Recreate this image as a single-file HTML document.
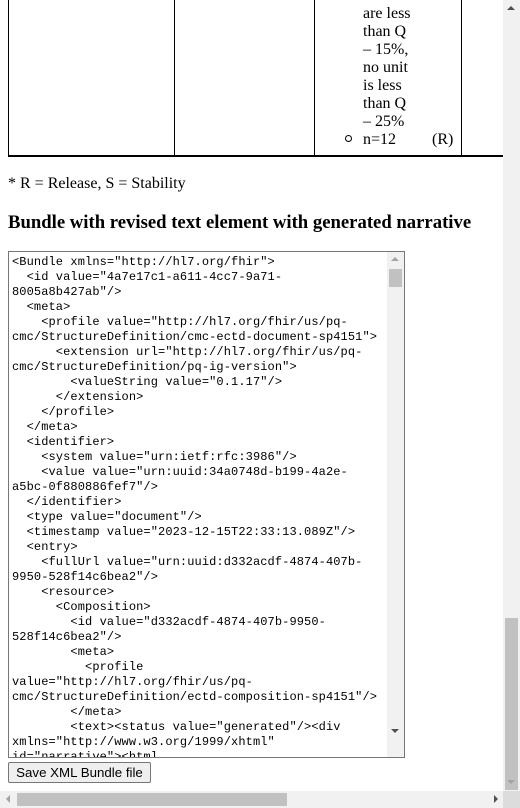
<!DOCTYPE html>
<html><head><style>
body{margin:0;width:520px;height:808px;overflow:hidden;background:#fff;font-family:"Liberation Serif",serif;font-size:16px;color:#000;position:relative}
.a{position:absolute}
.v{position:absolute;top:0;width:1px;height:156px;background:#000}
.t{position:absolute;left:363px;line-height:18px;white-space:nowrap}
pre{margin:0;font-family:"Liberation Mono",monospace;font-size:12px;line-height:15px;letter-spacing:0.1px;color:#000}
</style></head><body>
<div class="a" style="left:8px;top:155px;width:495px;height:2px;background:#000"></div>
<div class="v" style="left:8px"></div>
<div class="v" style="left:174px"></div>
<div class="v" style="left:314px"></div>
<div class="v" style="left:461px"></div>
<div class="t" style="top:5px">are less<br>than Q<br>– 15%,<br>no unit<br>is less<br>than Q<br>– 25%<br>n=12</div>
<div class="a" style="left:345px;top:135px;width:5px;height:5px;border:1px solid #000;border-radius:50%"></div>
<div class="a" style="left:432px;top:131px">(R)</div>
<div class="a" style="left:8px;top:175px">* R = Release, S = Stability</div>
<div class="a" style="left:8px;top:212px;font-weight:bold;font-size:18.7px">Bundle with revised text element with generated narrative</div>
<div class="a" style="left:8px;top:251px;width:395px;height:505px;border:1px solid #767676;overflow:hidden">
<pre style="position:absolute;left:3px;top:3px">&lt;Bundle xmlns="http://hl7.org/fhir"&gt;
  &lt;id value="4a7e17c1-a611-4cc7-9a71-
8005a8b427ab"/&gt;
  &lt;meta&gt;
    &lt;profile value="http://hl7.org/fhir/us/pq-
cmc/StructureDefinition/cmc-ectd-document-sp4151"&gt;
      &lt;extension url="http://hl7.org/fhir/us/pq-
cmc/StructureDefinition/pq-ig-version"&gt;
        &lt;valueString value="0.1.17"/&gt;
      &lt;/extension&gt;
    &lt;/profile&gt;
  &lt;/meta&gt;
  &lt;identifier&gt;
    &lt;system value="urn:ietf:rfc:3986"/&gt;
    &lt;value value="urn:uuid:34a0748d-b199-4a2e-
a5bc-0f880886fef7"/&gt;
  &lt;/identifier&gt;
  &lt;type value="document"/&gt;
  &lt;timestamp value="2023-12-15T22:33:13.089Z"/&gt;
  &lt;entry&gt;
    &lt;fullUrl value="urn:uuid:d332acdf-4874-407b-
9950-528f14c6bea2"/&gt;
    &lt;resource&gt;
      &lt;Composition&gt;
        &lt;id value="d332acdf-4874-407b-9950-
528f14c6bea2"/&gt;
        &lt;meta&gt;
          &lt;profile
value="http://hl7.org/fhir/us/pq-
cmc/StructureDefinition/ectd-composition-sp4151"/&gt;
        &lt;/meta&gt;
        &lt;text&gt;&lt;status value="generated"/&gt;&lt;div
xmlns="http://www.w3.org/1999/xhtml"
id="narrative"&gt;&lt;html</pre>
<div class="a" style="left:378px;top:0;width:17px;height:505px;background:#f1f1f1"></div>
<div class="a" style="left:380px;top:17px;width:13px;height:18px;background:#c1c1c1"></div>
<div class="a" style="left:382px;top:5px;width:0;height:0;border:4px solid transparent;border-bottom-color:#a3a3a3;border-top:0"></div>
<div class="a" style="left:382px;top:477px;width:0;height:0;border:4px solid transparent;border-top-color:#505050;border-bottom:0"></div>
</div>
<div class="a" style="left:8px;top:762px;width:141px;height:19px;border:1px solid #767676;border-radius:2px;background:#efefef;font-family:'Liberation Sans',sans-serif;font-size:13.3px;line-height:19px;text-align:center">Save XML Bundle file</div>
<div class="a" style="left:503px;top:0;width:17px;height:791px;background:#f1f1f1"></div>
<div class="a" style="left:505px;top:618px;width:13px;height:172px;background:#c1c1c1"></div>
<div class="a" style="left:507px;top:6px;border:4px solid transparent;border-bottom-color:#505050;border-top:0"></div>
<div class="a" style="left:507px;top:780px;border:4px solid transparent;border-top-color:#a3a3a3;border-bottom:0"></div>
<div class="a" style="left:0;top:791px;width:503px;height:17px;background:#f1f1f1"></div>
<div class="a" style="left:17px;top:793px;width:270px;height:13px;background:#c1c1c1"></div>
<div class="a" style="left:6px;top:795px;border:4px solid transparent;border-right-color:#a3a3a3;border-left:0"></div>
<div class="a" style="left:494px;top:795px;border:4px solid transparent;border-left-color:#505050;border-right:0"></div>
<div class="a" style="left:503px;top:791px;width:17px;height:17px;background:#dcdcdc"></div>
</body></html>
